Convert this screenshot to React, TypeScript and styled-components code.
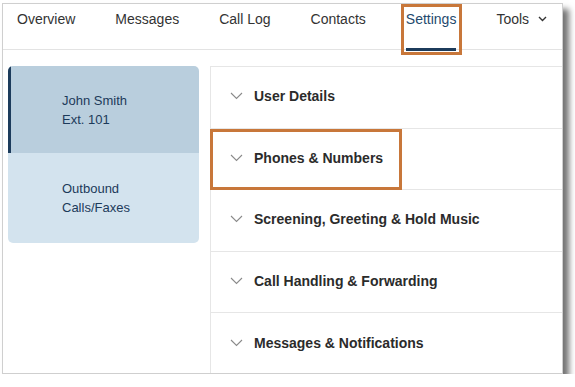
import React from 'react';
import styled, { createGlobalStyle } from 'styled-components';

const GlobalStyle = createGlobalStyle`
  html, body {
    margin: 0;
    padding: 0;
    background: #fff;
  }
  body {
    font-family: "Liberation Sans", Arial, Helvetica, sans-serif;
    -webkit-font-smoothing: antialiased;
  }
`;

const ORANGE = '#c8773a';
const NAVY = '#1c3b5b';

const Frame = styled.div`
  margin: 3px 0 0 2px;
  width: 559px;
  height: 369px;
  border: 1px solid #cfcfcf;
  background: #fff;
  box-shadow: 6px 6px 6px rgba(0, 0, 0, 0.55);
  overflow: hidden;
  display: flex;
  flex-direction: column;
`;

const Nav = styled.nav`
  height: 45px;
  flex: none;
  display: flex;
  align-items: stretch;
  gap: 40px;
  padding-left: 14px;
  border-bottom: 1px solid #e3e3e3;
`;

const Tab = styled.div<{ $active?: boolean; $highlight?: boolean }>`
  position: relative;
  display: flex;
  align-items: flex-start;
  gap: 9px;
  padding-top: 7px;
  font-size: 14px;
  line-height: 17px;
  color: ${({ $active }) => ($active ? '#1f4a6e' : '#333')};
  border-bottom: 3px solid ${({ $active }) => ($active ? NAVY : 'transparent')};
  margin-bottom: ${({ $active }) => ($active ? '-2px' : '0')};
  white-space: nowrap;

  ${({ $highlight }) =>
    $highlight &&
    `
    &::after {
      content: '';
      position: absolute;
      left: -5px;
      right: -6px;
      top: 0;
      bottom: -7px;
      border: 3px solid ${ORANGE};
    }
  `}
`;

const Caret = styled.svg`
  margin-top: 5px;
`;

const Body = styled.div`
  flex: 1;
  display: flex;
  align-items: flex-start;
  gap: 11px;
  padding: 16px 0 0 5px;
  min-height: 0;
`;

const Sidebar = styled.div`
  width: 191px;
  flex: none;
  border-radius: 5px;
  overflow: hidden;
  display: flex;
  flex-direction: column;
`;

const SideItem = styled.div<{ $active?: boolean; $h: number }>`
  height: ${({ $h }) => $h}px;
  display: flex;
  flex-direction: column;
  justify-content: center;
  padding-left: ${({ $active }) => ($active ? '51px' : '54px')};
  background: ${({ $active }) => ($active ? '#b9cedd' : '#d3e3ee')};
  border-left: ${({ $active }) => ($active ? `3px solid ${NAVY}` : 'none')};
  color: #1c3a5a;
  font-size: 13px;
  line-height: 19px;
`;

const Panel = styled.div`
  flex: 1;
  align-self: stretch;
  border-top: 1px solid #e6e6e6;
  border-left: 1px solid #e6e6e6;
`;

const Row = styled.div<{ $highlight?: boolean }>`
  position: relative;
  box-sizing: border-box;
  height: 61.6px;
  display: flex;
  align-items: center;
  gap: 11px;
  padding: 0 0 2px 19px;
  border-bottom: 1px solid #e6e6e6;
  font-size: 14px;
  font-weight: 700;
  color: #2b2b2b;

  ${({ $highlight }) =>
    $highlight &&
    `
    &::after {
      content: '';
      position: absolute;
      left: -1px;
      top: 0;
      width: 186px;
      bottom: -1px;
      border: 3px solid ${ORANGE};
    }
  `}
`;

const Chevron = () => (
  <svg width="13" height="8" viewBox="0 0 13 8" fill="none">
    <path d="M1 1l5.5 5.5L12 1" stroke="#8a8a8a" strokeWidth="1.1" />
  </svg>
);

const tabs = ['Overview', 'Messages', 'Call Log', 'Contacts', 'Settings'];

const sections = [
  'User Details',
  'Phones & Numbers',
  'Screening, Greeting & Hold Music',
  'Call Handling & Forwarding',
  'Messages & Notifications',
];

export default function App() {
  return (
    <>
      <GlobalStyle />
      <Frame>
        <Nav>
          {tabs.map((t) => (
            <Tab key={t} $active={t === 'Settings'} $highlight={t === 'Settings'}>
              {t}
            </Tab>
          ))}
          <Tab>
            Tools
            <Caret width="9" height="6" viewBox="0 0 9 6" fill="none">
              <path d="M1 1l3.5 3.5L8 1" stroke="#333" strokeWidth="1.4" />
            </Caret>
          </Tab>
        </Nav>
        <Body>
          <Sidebar>
            <SideItem $active $h={87}>
              <span>John Smith</span>
              <span>Ext. 101</span>
            </SideItem>
            <SideItem $h={90}>
              <span>Outbound</span>
              <span>Calls/Faxes</span>
            </SideItem>
          </Sidebar>
          <Panel>
            {sections.map((s) => (
              <Row key={s} $highlight={s === 'Phones & Numbers'}>
                <Chevron />
                {s}
              </Row>
            ))}
          </Panel>
        </Body>
      </Frame>
    </>
  );
}
